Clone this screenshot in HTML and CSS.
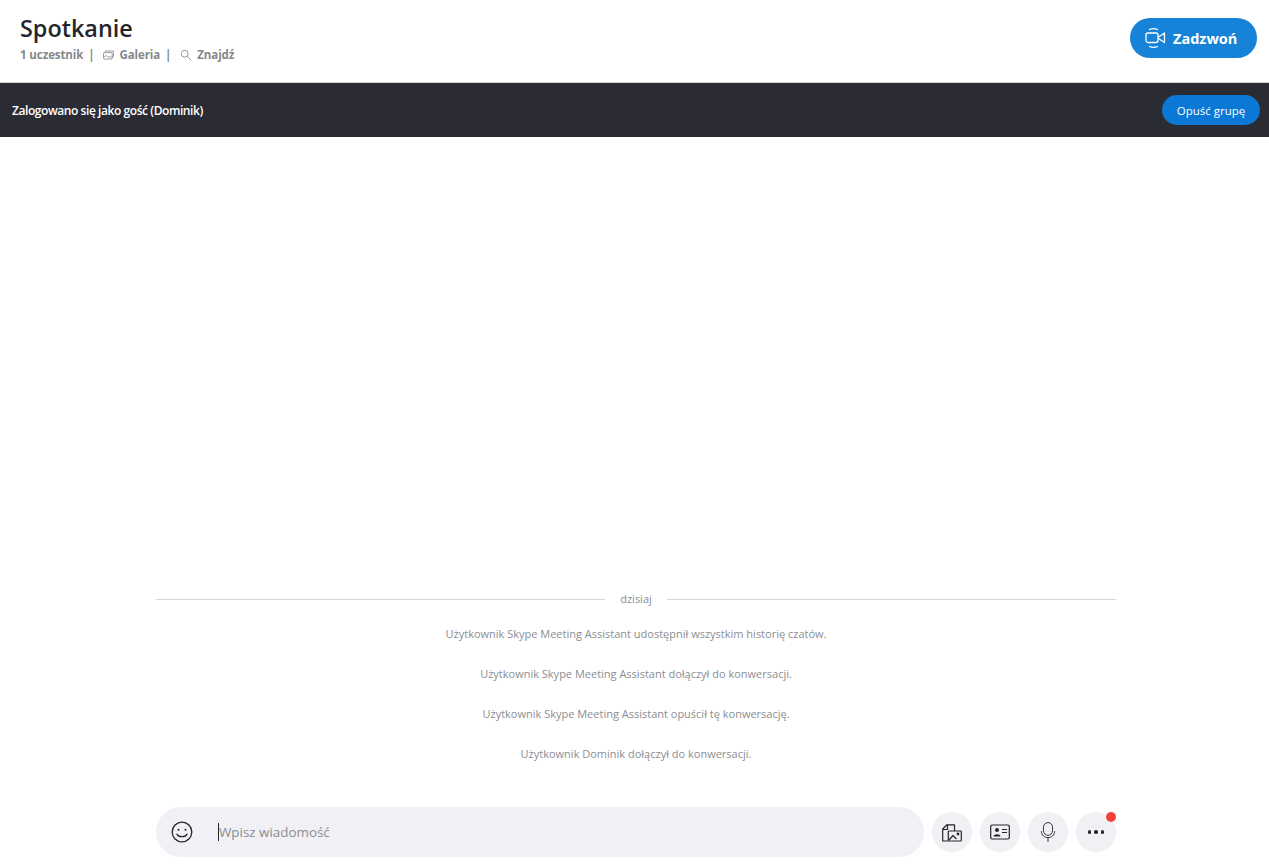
FILE: index.html
```html
<!DOCTYPE html>
<html lang="pl">
<head>
    <meta charset="UTF-8">
    <title>Spotkanie</title>
    <link rel="stylesheet" href="styles.css">
</head>
<body>
    <div class="app">
        <!-- Header -->
        <header class="chat-header">
            <div class="chat-info">
                <h1>Spotkanie</h1>
                <div class="chat-meta">
                    <span>1 uczestnik</span>
                    <span class="sep">|</span>
                    <svg class="meta-icon" viewBox="0 0 12 10" fill="none" stroke="#85888d" stroke-width=".9">
                        <path d="M2.500 2V.6H11.400V7H10"/>
                        <rect x=".6" y="2.400" width="9.400" height="7" rx=".8"/>
                        <path d="M1 7.500L3.500 5.500L6 7.500L7.500 6.500L9.500 8"/>
                    </svg>
                    <span>Galeria</span>
                    <span class="sep">|</span>
                    <svg class="search-icon" viewBox="0 0 14 14" fill="none" stroke="#85888d" stroke-width="1">
                        <circle cx="5.500" cy="5.500" r="4"/>
                        <path d="M8.500 8.500L13 13"/>
                    </svg>
                    <span>Znajdź</span>
                </div>
            </div>
            <button class="call-btn">
                <svg class="call-icon" viewBox="0 0 22 20" fill="none" stroke="#fff" stroke-width="1.300" stroke-linecap="round" stroke-linejoin="round">
                    <rect x="1" y="5" width="12" height="9.500" rx="2"/>
                    <path d="M13.500 9L19.500 5V14.500L13.500 10.500"/>
                    <path d="M4.500 1.500C7 .5 10 .5 12.500 1.500"/>
                    <path d="M4.500 18.500C7 19.500 10 19.500 12.500 18.500"/>
                </svg>
                Zadzwoń
            </button>
        </header>

        <!-- Guest bar -->
        <div class="guest-bar">
            <span class="guest-text">Zalogowano się jako gość (Dominik)</span>
            <button class="leave-btn">Opuść grupę</button>
        </div>

        <!-- Messages -->
        <main class="messages">
            <div class="date-row"><span>dzisiaj</span></div>
            <p>Użytkownik Skype Meeting Assistant udostępnił wszystkim historię czatów.</p>
            <p>Użytkownik Skype Meeting Assistant dołączył do konwersacji.</p>
            <p>Użytkownik Skype Meeting Assistant opuścił tę konwersację.</p>
            <p>Użytkownik Dominik dołączył do konwersacji.</p>
        </main>

        <!-- Composer -->
        <footer class="composer">
            <div class="input-box">
                <svg class="emoji" viewBox="0 0 22 22" fill="none" stroke="#24262b" stroke-width="1.300" stroke-linecap="round">
                    <circle cx="11" cy="11" r="9.800"/>
                    <circle cx="7.500" cy="8.800" r="1" fill="#24262b" stroke="none"/>
                    <circle cx="14.500" cy="8.800" r="1" fill="#24262b" stroke="none"/>
                    <path d="M6 13.200C7.500 16.500 14.500 16.500 16 13.200"/>
                </svg>
                <div class="placeholder"><i class="caret"></i>Wpisz wiadomość</div>
            </div>
            <button class="round-btn">
                <svg viewBox="0 0 20 20" fill="none" stroke="#24262b" stroke-width="1.200" stroke-linejoin="round">
                    <path d="M6 19H.7V7L5 2.800H12.500V9"/>
                    <path d="M.7 7.500H5.500V2.800"/>
                    <rect x="6.300" y="9" width="13" height="10" rx=".8"/>
                    <path d="M7 18L11 13.500L14.500 17"/>
                    <circle cx="16" cy="12" r=".8" fill="#24262b"/>
                </svg>
            </button>
            <button class="round-btn">
                <svg viewBox="0 0 20 16" fill="none" stroke="#24262b" stroke-width="1.200">
                    <rect x=".7" y="1" width="18.600" height="14" rx="1.500"/>
                    <circle cx="7" cy="6" r="2" fill="#24262b" stroke="none"/>
                    <path d="M3.500 12.500C3.500 9.500 10.500 9.500 10.500 12.500Z" fill="#24262b" stroke="none"/>
                    <path d="M12 5.500H17M12 8.500H17"/>
                </svg>
            </button>
            <button class="round-btn">
                <svg viewBox="0 0 16 22" fill="none" stroke="#33353b" stroke-width="1.100" stroke-linecap="round">
                    <rect x="3" y=".6" width="10" height="14" rx="5"/>
                    <path d="M.7 10.500C.7 19.500 15.300 19.500 15.300 10.500"/>
                    <path d="M8 17V21.500"/>
                </svg>
            </button>
            <button class="round-btn more-btn">
                <span class="dot"></span><span class="dot"></span><span class="dot"></span>
                <span class="badge"></span>
            </button>
        </footer>
    </div>
</body>
</html>
```

FILE: styles.css
```css
/* General Styling */
body {
    font-family: 'Open Sans', 'Noto Sans', sans-serif;
    margin: 0;
    padding: 0;
    background-color: #fff;
    color: #24262b;
    overflow: hidden;
}

button {
    font-family: inherit;
    border: none;
    cursor: pointer;
}

.app {
    display: flex;
    flex-direction: column;
    height: 868px;
}

/* Header */
.chat-header {
    display: flex;
    justify-content: space-between;
    align-items: flex-start;
    height: 83px;
    padding: 18px 12px 0 20px;
    box-sizing: border-box;
    border-bottom: 1px solid #d5d6d8;
}

.chat-info h1 {
    margin: 0;
    font-size: 23.400px;
    line-height: 20px;
    font-weight: 600;
    color: #24262b;
}

.chat-meta {
    display: flex;
    align-items: center;
    gap: 5px;
    margin-top: 9px;
    font-size: 11.500px;
    line-height: 16px;
    font-weight: 700;
    letter-spacing: -.1px;
    color: #85888d;
}

.sep {
    color: #7b8791;
}

.meta-icon {
    width: 11px;
    height: 10px;
    margin-left: 4px;
}

.search-icon {
    width: 12px;
    height: 12px;
    margin-left: 4px;
}

.call-btn {
    display: flex;
    align-items: center;
    gap: 6px;
    width: 127px;
    height: 40px;
    padding: 0 0 0 15px;
    border-radius: 20px;
    background-color: #1683d8;
    color: #fff;
    font-size: 14.500px;
    font-weight: 700;
}

.call-icon {
    width: 22px;
    height: 20px;
}

/* Guest bar */
.guest-bar {
    display: flex;
    justify-content: space-between;
    align-items: center;
    height: 54px;
    padding: 0 9px 0 12px;
    background-color: #2b2c33;
    color: #fff;
    font-size: 12px;
    font-weight: 600;
}

.guest-text {
    padding-top: 1px;
    letter-spacing: -.43px;
}

.leave-btn {
    width: 98px;
    height: 30px;
    padding: 0;
    border-radius: 15px;
    background-color: #0a78d4;
    color: #fff;
    font-size: 11.500px;
}

/* Messages */
.messages {
    flex: 1;
    display: flex;
    flex-direction: column;
    justify-content: flex-end;
    width: 960px;
    margin-left: 156px;
    padding-bottom: 33px;
    font-size: 11px;
    color: #8b8e92;
    text-align: center;
}

.messages p {
    margin: 0;
    height: 40px;
    line-height: 40px;
}

.date-row {
    display: flex;
    align-items: center;
    gap: 15px;
    height: 16px;
    line-height: 16px;
    margin-bottom: 7px;
}

.date-row::before,
.date-row::after {
    content: "";
    flex: 1;
    height: 1px;
    background-color: #d5d6d8;
}

/* Composer */
.composer {
    display: flex;
    align-items: center;
    gap: 8px;
    width: 960px;
    margin: 0 0 11px 156px;
    height: 50px;
}

.input-box {
    flex: 1;
    display: flex;
    align-items: center;
    height: 50px;
    padding-left: 15px;
    border-radius: 25px;
    background-color: #f0f0f5;
}

.emoji {
    width: 22px;
    height: 22px;
}

.placeholder {
    display: flex;
    align-items: center;
    margin-left: 25px;
    font-size: 13.400px;
    color: #8b8e92;
}

.caret {
    width: 1px;
    height: 18px;
    background-color: #24262b;
}

.round-btn {
    position: relative;
    display: flex;
    justify-content: center;
    align-items: center;
    gap: 3px;
    width: 40px;
    height: 40px;
    padding: 0;
    border-radius: 50%;
    background-color: #f0f0f5;
}

.round-btn svg {
    width: 20px;
    height: 20px;
}

.dot {
    width: 3.500px;
    height: 3.500px;
    border-radius: 50%;
    background-color: #24262b;
}

.badge {
    position: absolute;
    top: 0;
    right: 0;
    width: 10px;
    height: 10px;
    border-radius: 50%;
    background-color: #f4403a;
}
```
